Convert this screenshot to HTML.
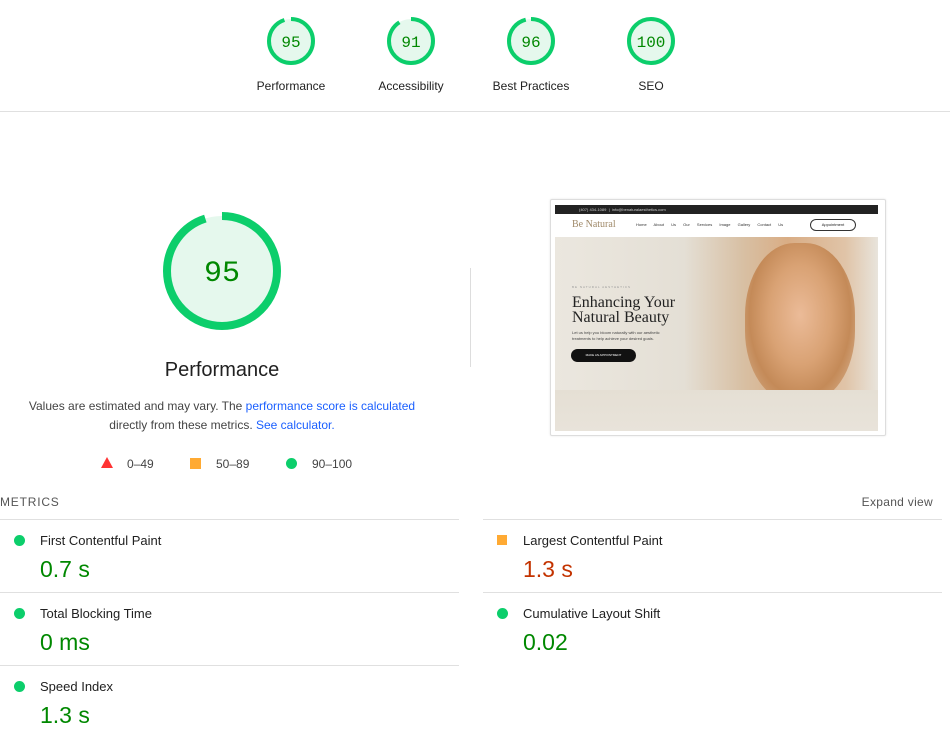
<!DOCTYPE html>
<html><head><meta charset="utf-8"><style>
*{margin:0;padding:0;box-sizing:border-box}
body{width:950px;height:744px;background:#fff;font-family:"Liberation Sans",sans-serif;color:#212121;position:relative;overflow:hidden}
.a{position:absolute}
.lbl{font-size:12px;width:120px;text-align:center;color:#212121}
.num{font-family:"Liberation Mono",monospace;fill:#008800;text-anchor:middle}
.mt{font-size:13px;color:#212121}
.mv{font-size:23px}
.dot{width:11px;height:11px;border-radius:50%;background:#0cce6b}
.line{height:1px;background:#e0e0e0}
a{color:#1a5fff;text-decoration:none}
</style></head><body>
<svg class="a" style="left:0;top:0" width="950" height="112">
<g fill="#e5f8ed" stroke="#0cce6b" stroke-width="4">
<circle cx="291" cy="41" r="22" stroke-dasharray="131.3 138.2" transform="rotate(-90 291 41)"/>
<circle cx="411" cy="41" r="22" stroke-dasharray="125.8 138.2" transform="rotate(-90 411 41)"/>
<circle cx="531" cy="41" r="22" stroke-dasharray="132.7 138.2" transform="rotate(-90 531 41)"/>
<circle cx="651" cy="41" r="22"/>
</g>
<g class="num" font-size="16">
<text x="291" y="47">95</text><text x="411" y="47">91</text><text x="531" y="47">96</text><text x="651" y="47">100</text>
</g>
<rect x="0" y="111" width="950" height="1" fill="#e0e0e0"/>
</svg>
<div class="a lbl" style="left:231px;top:79px">Performance</div>
<div class="a lbl" style="left:351px;top:79px">Accessibility</div>
<div class="a lbl" style="left:471px;top:79px">Best Practices</div>
<div class="a lbl" style="left:591px;top:79px">SEO</div>

<svg class="a" style="left:152px;top:201px" width="140" height="140">
<circle cx="70" cy="70" r="55" fill="#e5f8ed" stroke="#0cce6b" stroke-width="8" stroke-dasharray="328.3 345.6" transform="rotate(-90 70 70)"/>
<text x="70" y="80" class="num" font-size="30">95</text>
</svg>
<div class="a" style="left:122px;top:359px;width:200px;text-align:center;font-size:20px">Performance</div>
<div class="a" style="left:22px;top:397px;width:400px;text-align:center;font-size:12px;line-height:19px;color:#444">Values are estimated and may vary. The <a>performance score is calculated</a><br>directly from these metrics. <a>See calculator.</a></div>
<svg class="a" style="left:100px;top:456px" width="14" height="14"><polygon points="7,1 13,12 1,12" fill="#f33"/></svg>
<div class="a" style="left:127px;top:457px;font-size:12px;color:#444">0–49</div>
<div class="a" style="left:190px;top:458px;width:11px;height:11px;background:#fa3"></div>
<div class="a" style="left:216px;top:457px;font-size:12px;color:#444">50–89</div>
<div class="a dot" style="left:286px;top:458px"></div>
<div class="a" style="left:312px;top:457px;font-size:12px;color:#444">90–100</div>

<div class="a" style="left:470px;top:268px;width:1px;height:99px;background:#ddd"></div>

<div class="a" style="left:550px;top:199px;width:336px;height:237px;border:1px solid #ddd;border-radius:2px;background:#fff;box-shadow:0 0 2px rgba(0,0,0,.1)"></div>
<div class="a" style="left:555px;top:205px;width:323px;height:226px;background:#ece6da;overflow:hidden">
 <div class="a" style="left:0;top:0;width:323px;height:9px;background:#222"></div>
 <div class="a" style="left:24px;top:2px;font-size:4px;color:#ccc">(407) 434-1089 &nbsp;|&nbsp; info@benaturalaesthetics.com</div>
 <div class="a" style="left:0;top:9px;width:323px;height:23px;background:#fff"></div>
 <div class="a" style="left:17px;top:14px;font-family:'Liberation Serif',serif;font-size:10px;color:#a08a6a">Be Natural</div>
 <div class="a" style="left:81px;top:17px;font-size:4px;color:#333;word-spacing:6px">Home About&nbsp;Us Our&nbsp;Services Image&nbsp;Gallery Contact&nbsp;Us</div>
 <div class="a" style="left:255px;top:14px;width:46px;height:12px;border:1px solid #333;border-radius:6px;font-size:4px;text-align:center;line-height:10px">Appointment</div>
 <div class="a" style="left:0;top:32px;width:323px;height:194px;background:linear-gradient(90deg,#ebe7df 0%,#e4dfd5 40%,#d8c0a4 58%,#d9ad85 72%,#e0c4a8 90%,#e8e4dc 100%)"></div>
 <div class="a" style="left:190px;top:38px;width:110px;height:160px;border-radius:45%;background:radial-gradient(ellipse at 50% 45%,#ebbb98 0%,#d9a274 40%,#c48a58 65%,rgba(220,180,140,0) 100%)"></div>
 <div class="a" style="left:0;top:185px;width:323px;height:41px;background:linear-gradient(#e5dfd4,#e8e3da)"></div>
 <div class="a" style="left:17px;top:80px;font-size:3px;color:#999;letter-spacing:1px">BE NATURAL AESTHETICS</div>
 <div class="a" style="left:17px;top:90px;font-family:'Liberation Serif',serif;font-size:16px;line-height:15px;color:#222">Enhancing Your<br>Natural Beauty</div>
 <div class="a" style="left:17px;top:125px;font-size:4px;line-height:6px;color:#444">Let us help you bloom naturally with our aesthetic<br>treatments to help achieve your desired goals.</div>
 <div class="a" style="left:16px;top:144px;width:65px;height:13px;border-radius:7px;background:#111;color:#fff;font-size:3px;text-align:center;line-height:13px">MAKE AN APPOINTMENT</div>
</div>

<div class="a" style="left:0;top:495px;font-size:12px;letter-spacing:.8px;color:#555">METRICS</div>
<div class="a" style="right:17px;top:495px;font-size:12px;color:#555;letter-spacing:.3px">Expand view</div>
<div class="a line" style="left:0;top:519px;width:459px"></div>
<div class="a line" style="left:483px;top:519px;width:459px"></div>
<div class="a line" style="left:0;top:592px;width:459px"></div>
<div class="a line" style="left:483px;top:592px;width:459px"></div>
<div class="a line" style="left:0;top:665px;width:459px"></div>

<div class="a dot" style="left:14px;top:535px"></div>
<div class="a mt" style="left:40px;top:533px">First Contentful Paint</div>
<div class="a mv" style="left:40px;top:556px;color:#080">0.7 s</div>
<div class="a dot" style="left:14px;top:608px"></div>
<div class="a mt" style="left:40px;top:606px">Total Blocking Time</div>
<div class="a mv" style="left:40px;top:629px;color:#080">0 ms</div>
<div class="a dot" style="left:14px;top:681px"></div>
<div class="a mt" style="left:40px;top:679px">Speed Index</div>
<div class="a mv" style="left:40px;top:702px;color:#080">1.3 s</div>

<div class="a" style="left:497px;top:535px;width:10px;height:10px;background:#fa3"></div>
<div class="a mt" style="left:523px;top:533px">Largest Contentful Paint</div>
<div class="a mv" style="left:523px;top:556px;color:#c33300">1.3 s</div>
<div class="a dot" style="left:497px;top:608px"></div>
<div class="a mt" style="left:523px;top:606px">Cumulative Layout Shift</div>
<div class="a mv" style="left:523px;top:629px;color:#080">0.02</div>
</body></html>
